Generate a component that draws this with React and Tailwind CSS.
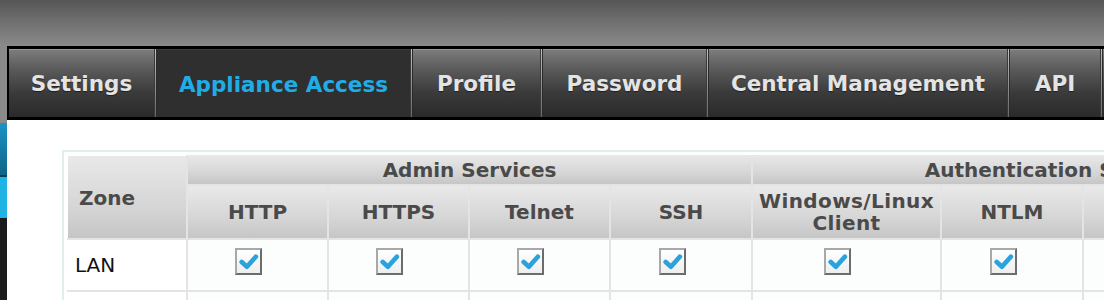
import React from "react";

const tabFont = { fontFamily: '"DejaVu Sans", Verdana, sans-serif' };

function Sep() {
  return (
    <div className="w-[3px] self-stretch flex">
      <div className="w-px bg-[#3a3a3a]" />
      <div className="w-px bg-[linear-gradient(180deg,#c0c0c0,#8a8a8a_60%,#666666)]" />
      <div className="w-px bg-[#2a2a2a]" />
    </div>
  );
}

function Tab({ label, w, active }) {
  if (active) {
    return (
      <div className={`${w} h-full flex items-center justify-center pt-[3px] bg-[#2f2f2f] border-t border-[#3c3c3c]`}>
        <span className="text-[21.5px] font-bold text-[#20ade5] whitespace-nowrap" style={tabFont}>
          {label}
        </span>
      </div>
    );
  }
  return (
    <div className={`${w} h-full flex items-center justify-center pt-[3px] bg-[linear-gradient(180deg,#b4b4b4_0px,#7c7c7c_1px,#5a5a5a_30%,#3a3a3a_65%,#2a2a2a_100%)]`}>
      <span
        className="text-[21.5px] font-bold text-[#e4e4e4] whitespace-nowrap [text-shadow:0_1px_1px_rgba(0,0,0,0.5)]"
        style={tabFont}
      >
        {label}
      </span>
    </div>
  );
}

function Check({ checked = true }) {
  return (
    <div className="w-[27px] h-[27px] border-2 border-t-[#a8a8a8] border-l-[#a8a8a8] border-b-[#6c6c6c] border-r-[#6c6c6c] bg-[linear-gradient(180deg,#ffffff,#eeeeee)] flex items-center justify-center">
      {checked && (
        <svg width="23" height="23" viewBox="0 0 22 22">
          <path d="M4.5 11.5 L9.5 16 L18 6.5" fill="none" stroke="#2aa3dc" strokeWidth="4.5" strokeLinecap="round" strokeLinejoin="round" />
        </svg>
      )}
    </div>
  );
}

const hd = "bg-[linear-gradient(180deg,#e9e9e9,#d6d6d6_60%,#c6c6c6)] text-[#4a4a4a] font-bold text-[20px] flex items-center justify-center text-center leading-[22px]";

function DataCell({ children, first }) {
  if (first) {
    return (
      <div className="bg-white h-[50px] flex items-center pl-[8px] text-[20px] text-[#111]" style={tabFont}>
        {children}
      </div>
    );
  }
  return (
    <div className="bg-[#fcfdfd] h-[50px] flex items-center justify-center pb-[8px]">
      <div className="mr-[18px]">{children}</div>
    </div>
  );
}

export default function App() {
  const cols = ["HTTP", "HTTPS", "Telnet", "SSH", "Windows/Linux Client", "NTLM", "", ""];
  return (
    <div
      className="w-[1104px] h-[300px] overflow-hidden flex flex-col bg-[linear-gradient(180deg,#565656_0px,#6e6e6e_20px,#8a8a8a_46px,#8c8c8c_100%)]"
      style={tabFont}
    >
      <div className="h-[46px] shrink-0" />
      <div className="flex shrink-0">
        <div className="w-[7px] shrink-0" />
        <div className="flex-1 flex h-[74px] border-t-[3px] border-b-[3px] border-l-2 border-black overflow-hidden">
          <Tab label="Settings" w="w-[145px] shrink-0" />
          <Sep />
          <Tab label="Appliance Access" w="w-[253px] shrink-0" active />
          <Sep />
          <Tab label="Profile" w="w-[127px] shrink-0" />
          <Sep />
          <Tab label="Password" w="w-[163px] shrink-0" />
          <Sep />
          <Tab label="Central Management" w="w-[298px] shrink-0" />
          <Sep />
          <Tab label="API" w="w-[90px] shrink-0" />
          <Sep />
          <Tab label="" w="flex-1" />
        </div>
      </div>
      <div className="flex flex-1 min-h-0">
        <div className="w-[7px] shrink-0 flex flex-col">
          <div className="h-[3px]" />
          <div className="h-[52px] bg-[linear-gradient(180deg,#1c93c3,#0f6488)]" />
          <div className="h-[2px] bg-[#0b3f57]" />
          <div className="h-[41px] bg-[#1fb4e4]" />
          <div className="flex-1 bg-[#1c1c1c]" />
        </div>
        <div className="flex-1 bg-white pl-[55px] pt-[30px] overflow-hidden">
          <div className="w-max border-2 border-[#e2eeee] p-[3px] bg-white">
            <div className="grid grid-cols-[119px_139px_139px_139px_140px_187px_140px_140px_140px] grid-rows-[29px_52px_50px_50px] gap-[2px] bg-[#e4e4e4]">
              <div className={`${hd} row-span-2 justify-start pl-[11px] pt-[2px] border-t border-l border-white`}>Zone</div>
              <div className={`${hd} col-span-4 bg-[linear-gradient(180deg,#e2e2e2,#cbcbcb)]`}>Admin Services</div>
              <div className={`${hd} col-span-4 bg-[linear-gradient(180deg,#e2e2e2,#cbcbcb)] whitespace-nowrap`}>Authentication Services</div>
              {cols.map((c, i) => (
                <div key={i} className={`${hd} ${c.includes("Windows") ? "tracking-[0.4px]" : ""} px-1`}>
                  {c.includes("Windows") ? (
                    <span>
                      Windows/Linux
                      <br />
                      Client
                    </span>
                  ) : (
                    c
                  )}
                </div>
              ))}
              <DataCell first>LAN</DataCell>
              {[0, 1, 2, 3, 4, 5].map((i) => (
                <DataCell key={i}>
                  <Check />
                </DataCell>
              ))}
              <DataCell />
              <DataCell />
              <DataCell first />
              {[0, 1, 2, 3, 4, 5].map((i) => (
                <DataCell key={"b" + i}>
                  <div className="mt-[14px]">
                    <Check checked={false} />
                  </div>
                </DataCell>
              ))}
              <DataCell />
              <DataCell />
            </div>
          </div>
        </div>
      </div>
    </div>
  );
}
